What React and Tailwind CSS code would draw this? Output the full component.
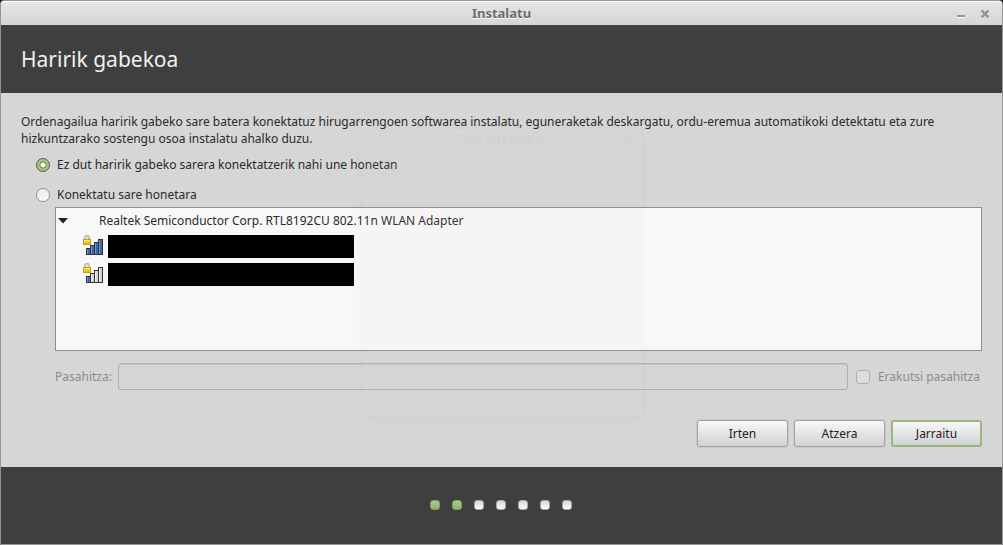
import { useState } from "react";

const STEPS = 7;
const CURRENT_STEP = 2;

const NETWORKS = [
  { id: "net-1", strength: 4 },
  { id: "net-2", strength: 1 },
];

function SignalIcon({ strength }) {
  const bars = [
    { x: 3, y: 13 },
    { x: 7, y: 10 },
    { x: 11, y: 7 },
    { x: 15, y: 4 },
  ];
  return (
    <svg width="20" height="20" viewBox="0 0 20 20" className="shrink-0" aria-hidden="true">
      {bars.map((b, i) => (
        <g key={b.x}>
          <rect
            x={b.x + 0.5}
            y={b.y + 0.5}
            width="4"
            height={19 - b.y}
            fill={i < strength ? "#3f66ae" : "#d4d6d2"}
            stroke="#2e3436"
          />
          <path
            d={`M${b.x + 1.5} ${b.y + 1}V19`}
            stroke={i < strength ? "#7096d0" : "#f2f2f0"}
          />
        </g>
      ))}
      <path d="M2 5V3a2 2 0 0 1 4 0V5" fill="none" stroke="#a8aaa6" strokeWidth="2.200" />
      <path d="M2 5V3a2 2 0 0 1 4 0V5" fill="none" stroke="#dcdddb" strokeWidth="1" />
      <rect x="0.5" y="4.500" width="7" height="5" fill="#f3cb2c" stroke="#c99c00" />
      <path d="M1 5.500H7" stroke="#fbe987" />
      <path d="M1 8.500H7" stroke="#e3b81c" />
    </svg>
  );
}

function Radio({ label, checked, onChange }) {
  return (
    <label className="flex h-5 items-center gap-[7px] self-start">
      <input
        type="radio"
        name="wireless"
        checked={checked}
        onChange={onChange}
        className="size-3.5 appearance-none rounded-full border border-[#929292] bg-linear-to-b from-[#ececec] to-[#fafafa] checked:border-[#56604e] checked:bg-[radial-gradient(circle,#fff_2px,#6f8359_3px,#a3c582_4px)]"
      />
      {label}
    </label>
  );
}

function Button({ children, primary = false }) {
  return (
    <button
      type="button"
      className={
        "h-[27px] w-[91px] rounded-[3px] bg-linear-to-b from-[#f8f8f8] to-[#d2d2d2] text-center text-[#222] " +
        (primary
          ? "border-2 border-[#9ab87c]"
          : "border border-[#a2a2a2] shadow-[0_0_0_1px_#cacaca]")
      }
    >
      {children}
    </button>
  );
}

export default function App() {
  const [connect, setConnect] = useState(false);

  return (
    <div className="bg-black font-['Noto_Sans',sans-serif] text-xs text-[#2a2a2a]">
      <div className="relative flex min-h-screen flex-col rounded-t-[4px] border border-[#969696] bg-[#d6d6d6]">
        <header className="grid h-6 grid-cols-[1fr_auto_1fr] items-center rounded-t-[3px] border-t border-white bg-linear-to-b from-[#e6e6e6] to-[#d5d5d5] px-3">
          <span />
          <span className="text-[13px] font-bold text-[#6c6c6c] [text-shadow:0_1px_0_#fff]">Instalatu</span>
          <div className="flex items-center justify-end gap-3.5">
            <button type="button" aria-label="Minimizatu">
              <svg width="10" height="10" viewBox="0 0 10 10" aria-hidden="true">
                <path d="M1 8.500H9" stroke="#fff" />
                <path d="M1 7H9" stroke="#969696" strokeWidth="2" />
              </svg>
            </button>
            <button type="button" aria-label="Itxi">
              <svg width="10" height="10" viewBox="0 0 10 10" aria-hidden="true">
                <path d="M1.500 2.500L8.500 9.500M8.500 2.500L1.500 9.500" stroke="#fff" strokeWidth="2" />
                <path d="M1.500 1.500L8.500 8.500M8.500 1.500L1.500 8.500" stroke="#969696" strokeWidth="2.500" />
              </svg>
            </button>
          </div>
        </header>

        <div className="flex h-[68px] items-center bg-[#3f3f3f] px-5">
          <h1 className="text-[21px] text-[#f0f0f0]">Haririk gabekoa</h1>
        </div>

        <main className="flex grow flex-col p-5">
          <p className="leading-[17px]">
            Ordenagailua haririk gabeko sare batera konektatuz hirugarrengoen softwarea instalatu, eguneraketak
            deskargatu, ordu-eremua automatikoki detektatu eta zure hizkuntzarako sostengu osoa instalatu ahalko duzu.
          </p>

          <div className="mt-2 flex flex-col gap-2.5 pl-[15px]">
            <Radio
              label="Ez dut haririk gabeko sarera konektatzerik nahi une honetan"
              checked={!connect}
              onChange={() => setConnect(false)}
            />
            <Radio label="Konektatu sare honetara" checked={connect} onChange={() => setConnect(true)} />
          </div>

          <div className="mt-0.5 ml-[34px] min-h-36 grow border border-[#8f8f8f] bg-[#f8f8f8]">
            <button type="button" aria-expanded="true" className="flex h-[26px] items-center gap-[31px] pl-0.5">
              <svg width="10" height="6" viewBox="0 0 10 6" aria-hidden="true">
                <path d="M0 0H10L5 5.500Z" fill="#222" />
              </svg>
              Realtek Semiconductor Corp. RTL8192CU 802.11n WLAN Adapter
            </button>
            <ul className="flex flex-col gap-[5px] pt-px pl-[27px]">
              {NETWORKS.map((n) => (
                <li key={n.id} className="flex h-[23px] gap-[5px]">
                  <SignalIcon strength={n.strength} />
                  <span className="w-[246px] bg-black" />
                </li>
              ))}
            </ul>
          </div>

          <div className="mt-3 ml-[34px] flex items-center text-[#8c8c8c]">
            <label htmlFor="password">Pasahitza:</label>
            <input
              id="password"
              type="text"
              disabled
              className="ml-1.5 h-[27px] min-w-0 grow rounded-[3px] border border-[#b0b0b0] bg-[#d6d6d6] px-1.5 shadow-[inset_0_1px_0_#c6c6c6]"
            />
            <label className="ml-2 flex items-center gap-2 pr-0.5">
              <input
                type="checkbox"
                disabled
                className="size-3.5 appearance-none rounded-[3px] border border-[#afafaf] bg-[#dedede]"
              />
              Erakutsi pasahitza
            </label>
          </div>

          <div className="mt-[30px] flex justify-end gap-1.5">
            <Button>Irten</Button>
            <Button>Atzera</Button>
            <Button primary>Jarraitu</Button>
          </div>
        </main>

        <footer className="flex h-[77px] items-center justify-center gap-3 bg-[#3f3f3f] pr-0.5 pb-0.5">
          {Array.from({ length: STEPS }, (_, i) => (
            <span
              key={i}
              className={
                "size-2.5 rounded-[3px] border bg-linear-to-b " +
                (i < CURRENT_STEP
                  ? "border-[#7d9b62] from-[#a9c78c] to-[#93b573]"
                  : "border-[#a9a9a9] from-[#d9d9d9] to-[#fafafa]")
              }
            />
          ))}
        </footer>

        {/* Fading window of the screenshot tool */}
        <div
          aria-hidden="true"
          className="pointer-events-none absolute top-1/2 left-1/2 flex h-[288px] w-[280px] -translate-x-1/2 -translate-y-1/2 justify-center rounded-t-[4px] bg-[#d6d6d6]/[0.07] shadow-[0_1px_8px_rgb(0_0_0/0.04)]"
        >
          <span className="text-[11px] leading-5 font-bold text-black/[0.03]">Take Screenshot</span>
          <svg width="26" height="10" viewBox="0 0 26 10" className="absolute top-1.5 right-2.5 opacity-[0.02]">
            <path d="M0 6H6M18 1L25 8M25 1L18 8" stroke="#000" strokeWidth="2" />
          </svg>
        </div>
      </div>
    </div>
  );
}
